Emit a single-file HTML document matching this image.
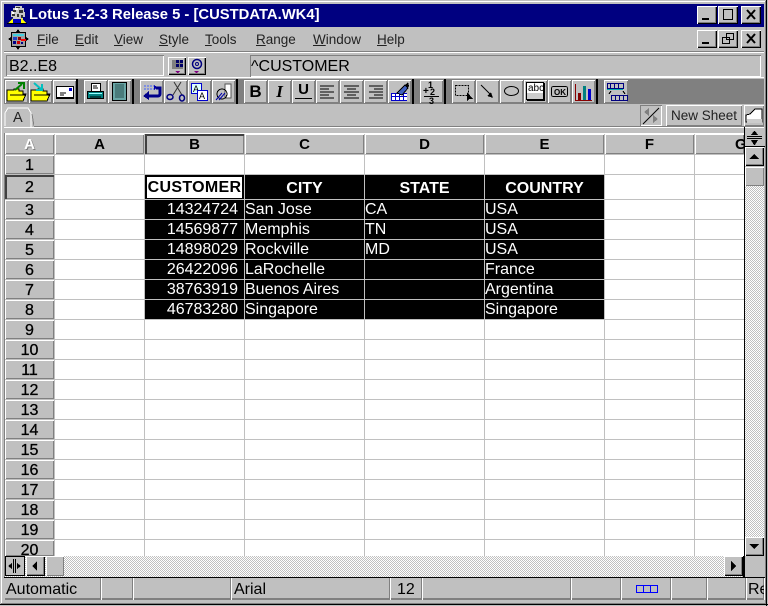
<!DOCTYPE html>
<html><head><meta charset="utf-8"><title>Lotus 1-2-3</title>
<style>
html,body{margin:0;padding:0;background:#c0c0c0}
#w{position:relative;width:768px;height:606px;overflow:hidden;background:#c0c0c0;font-family:"Liberation Sans",Arial,sans-serif;color:#000}
#w div,#w span,#w svg{position:absolute}
#w svg{shape-rendering:crispEdges}
.b{background:#c0c0c0;box-shadow:inset 1px 1px #fff,inset -1px -1px #808080;}
.tb{top:80px;width:23px;height:23px}
.tb svg{left:0;top:0}
.wb{width:20px;height:18px;background:#c0c0c0;box-shadow:inset 1px 1px #fff,inset -1px -1px #000,inset -2px -2px #808080}
.wb svg{left:0;top:0}
.m{top:32px;font-size:13.5px;line-height:16px;color:#222;white-space:nowrap}
u{text-decoration:underline}
.ch{top:134px;height:20px;background:#c0c0c0;box-shadow:inset 1px 1px #fff,inset -1px -1px #808080;text-align:center;font:bold 15px/22px "Liberation Sans",sans-serif}
.rh{left:5px;width:49px;background:#c0c0c0;box-shadow:inset 1px 1px #fff,inset -1px -1px #808080;text-align:center;font:16px/22px "Liberation Sans",sans-serif;-webkit-text-stroke:.3px #000;overflow:hidden}
.h{left:55px;width:689px;height:1px;background:#c0c0c0}
.v{top:155px;width:1px;height:401px;background:#c0c0c0}
.d{font-size:16px;line-height:20px;color:#fff;white-space:nowrap}
.n{left:145px;width:93px;text-align:right}
.c{left:245px}.e{left:365px}.f{left:485px}
.t{font:bold 16px/24px "Liberation Sans",sans-serif;color:#fff;text-align:center;top:177px}
.s{top:578px;height:22px;background:#c0c0c0;box-shadow:inset 0 -2px #808080,inset -1px 0 #808080;border-right:1px solid #fff;font-size:16px;line-height:24px;white-space:nowrap;overflow:hidden}
.hatch{background:repeating-conic-gradient(#c0c0c0 0 25%,#fff 0 50%) 0 0/2px 2px}
</style></head><body><div id="w">
<!-- frame -->
<div style="left:0;top:0;width:768px;height:1px;background:#c0c0c0"></div>
<div style="left:1px;top:1px;width:765px;height:1px;background:#fff"></div>
<div style="left:1px;top:1px;width:1px;height:603px;background:#fff"></div>
<div style="left:766px;top:0;width:1px;height:606px;background:#000"></div>
<div style="left:765px;top:1px;width:1px;height:604px;background:#808080"></div>
<div style="left:0;top:604px;width:768px;height:1px;background:#000"></div>
<div style="left:1px;top:603px;width:765px;height:1px;background:#808080"></div>

<!-- title -->
<div style="left:4px;top:4px;width:760px;height:23px;background:#000080"></div>
<svg style="left:6px;top:5px" width="22" height="20" viewBox="0 0 22 20"><path d="M9 1h7v2h2v4h1v5h-2v3H7v-3H5V6h2V3h2z" fill="#c8c8c8"/><path d="M10 2h4v1h-4zM7 5h3v2H7zM13 5h4v3h-4zM6 9h3v2H6zM11 9h2v3h-2zM15 10h2v3h-2z" fill="#333"/><path d="M9 3h3v2H9zM6 7h2v2H6z" fill="#fff"/><path d="M2 18l5-5v5zM20 18l-5-5v5z" fill="#ff0"/><rect x="7" y="14" width="8" height="4" fill="#0000c0"/><rect x="1" y="18" width="20" height="1" fill="#000"/></svg>
<div style="left:29px;top:7px;color:#fff;font:bold 14.8px/17px 'Liberation Sans',sans-serif;white-space:nowrap">Lotus 1-2-3 Release 5 - [CUSTDATA.WK4]</div>
<div class="wb" style="left:697px;top:6px"><svg width="20" height="18"><rect x="5" y="12" width="7" height="2" fill="#000"/></svg></div>
<div class="wb" style="left:718px;top:6px"><svg width="20" height="18"><path d="M5.500 3.500h9v10h-9z" fill="none" stroke="#000"/><rect x="5" y="3" width="10" height="1"/></svg></div>
<div class="wb" style="left:741px;top:6px"><svg width="20" height="18"><path d="M6 4l8 9M14 4l-8 9" stroke="#000" stroke-width="2" style="shape-rendering:auto"/></svg></div>

<!-- menu -->
<svg style="left:8px;top:29px" width="21" height="21" viewBox="0 0 21 21"><path d="M10 0l2 3H8zM10 21l-2-3h4zM0 10l3-2v4zM21 10l-3 2V8z" fill="#000"/><rect x="3" y="3" width="15" height="15" fill="#000"/><rect x="4" y="4" width="13" height="13" fill="#a0a0a0"/><rect x="5" y="5" width="11" height="2" fill="#40d0e0"/><rect x="5" y="8" width="4" height="3" fill="#2040c0"/><rect x="10" y="8" width="3" height="3" fill="#800"/><rect x="13" y="10" width="5" height="2" fill="#f00"/><rect x="5" y="12" width="3" height="3" fill="#008"/><rect x="9" y="12" width="3" height="3" fill="#c00"/><rect x="13" y="13" width="2" height="2" fill="#008"/></svg>
<div class="m" style="left:37px"><u>F</u>ile</div>
<div class="m" style="left:75px"><u>E</u>dit</div>
<div class="m" style="left:114px"><u>V</u>iew</div>
<div class="m" style="left:159px"><u>S</u>tyle</div>
<div class="m" style="left:205px"><u>T</u>ools</div>
<div class="m" style="left:256px"><u>R</u>ange</div>
<div class="m" style="left:313px"><u>W</u>indow</div>
<div class="m" style="left:377px"><u>H</u>elp</div>
<div class="wb" style="left:697px;top:30px"><svg width="20" height="18"><rect x="5" y="12" width="7" height="2"/></svg></div>
<div class="wb" style="left:718px;top:30px"><svg width="20" height="18"><path d="M8.500 3.500h7v6h-7zM4.500 7.500h7v6h-7z" fill="#c0c0c0" stroke="#000"/><rect x="8" y="3" width="8" height="1"/><rect x="4" y="7" width="8" height="1"/></svg></div>
<div class="wb" style="left:741px;top:30px"><svg width="20" height="18"><path d="M6 4l8 9M14 4l-8 9" stroke="#000" stroke-width="2" style="shape-rendering:auto"/></svg></div>
<div style="left:4px;top:51px;width:760px;height:1px;background:#808080"></div>
<div style="left:4px;top:52px;width:760px;height:1px;background:#fff"></div>

<!-- edit line -->
<div style="left:6px;top:55px;width:158px;height:21px;box-shadow:inset 1px 1px #808080,inset -1px -1px #fff"></div>
<div style="left:9px;top:57px;font-size:16px;line-height:19px">B2..E8</div>
<div class="wb" style="left:168px;top:57px;width:18px;height:18px"><svg width="18" height="18"><rect x="4" y="3" width="11" height="9" fill="#808080"/><path d="M8 3h3v3H8zM12 3h3v3h-3zM8 7h3v3H8zM12 7h3v3h-3z" fill="#006"/><path d="M7 14h5l-2 2H9z" fill="#800080"/></svg></div>
<div class="wb" style="left:188px;top:57px;width:18px;height:18px"><svg width="18" height="18" style="shape-rendering:auto"><circle cx="9" cy="7" r="4.500" fill="none" stroke="#000080" stroke-width="1.500"/><circle cx="9" cy="7" r="1.500" fill="none" stroke="#000080"/><path d="M6 14h5l-2 2H8z" fill="#800080"/></svg></div>
<div style="left:250px;top:55px;width:511px;height:22px;box-shadow:inset 1px 1px #808080,inset -1px -1px #fff"></div>
<div style="left:251px;top:57px;font-size:16px;line-height:19px;white-space:nowrap">^CUSTOMER</div>
<div style="left:4px;top:77px;width:760px;height:1px;background:#fff"></div>

<!-- toolbar -->
<div style="left:4px;top:79px;width:760px;height:25px;background:#808080"></div>
<div style="left:76px;top:79px;width:2px;height:25px;background:#000"></div>
<div style="left:132px;top:79px;width:2px;height:25px;background:#000"></div>
<div style="left:236px;top:79px;width:2px;height:25px;background:#000"></div>
<div style="left:412px;top:79px;width:2px;height:25px;background:#000"></div>
<div style="left:444px;top:79px;width:2px;height:25px;background:#000"></div>
<div style="left:596px;top:79px;width:2px;height:25px;background:#000"></div>

<div class="b tb" style="left:5px"><svg width="23" height="23"><path d="M2 10h7v-1h5v2h4v3h3l-3 7H2z" fill="#ff0" stroke="#000"/><path d="M5 15h15" stroke="#000"/><path d="M10 10l7-6M13 3h6v6" fill="none" stroke="#008000" stroke-width="2" style="shape-rendering:auto"/></svg></div>
<div class="b tb" style="left:29px"><svg width="23" height="23"><path d="M2 10h7v-1h5v2h4v3h3l-3 7H2z" fill="#ff0" stroke="#000"/><path d="M5 15h15" stroke="#000"/><path d="M5 3l7 6M13 4v6H7" fill="none" stroke="#00c0c0" stroke-width="2" style="shape-rendering:auto"/></svg></div>
<div class="b tb" style="left:53px"><svg width="23" height="23"><rect x="3.500" y="6.500" width="17" height="12" fill="#fff" stroke="#000"/><rect x="4" y="17" width="17" height="2"/><rect x="16" y="8" width="3" height="3" fill="#00c"/><path d="M7 13h6M7 15h4" stroke="#000"/></svg></div>
<div class="b tb" style="left:84px"><svg width="23" height="23"><rect x="7.500" y="3.500" width="9" height="8" fill="#fff" stroke="#000"/><path d="M9 6h4M9 8h5" stroke="#000"/><path d="M3.500 11.500h16v7h-16z" fill="#008080" stroke="#000"/><rect x="5" y="13" width="13" height="1" fill="#9ff"/><rect x="6" y="16" width="11" height="2" fill="#004040"/></svg></div>
<div class="b tb" style="left:108px"><svg width="23" height="23"><rect x="4.500" y="2.500" width="14" height="18" fill="#6aa6a6" stroke="#000"/><path d="M7 5h9M7 7h9M7 9h9M7 11h9M7 13h9M7 15h9M7 17h9" stroke="#2a5050"/></svg></div>
<div class="b tb" style="left:140px"><svg width="23" height="23"><path d="M4 6h10M4 9h10" stroke="#4060ff" stroke-dasharray="2 1"/><path d="M14 5l3 2-3 3z" fill="#00a"/><path d="M16 8h4v6a2 2 0 0 1-2 2H8" fill="none" stroke="#00008b" stroke-width="3" style="shape-rendering:auto"/><path d="M9 11v9l-6-4z" fill="#00008b"/></svg></div>
<div class="b tb" style="left:164px"><svg width="23" height="23" style="shape-rendering:auto"><path d="M17 2L9 15M10 2l8 13" stroke="#333" fill="none"/><ellipse cx="6" cy="17" rx="3" ry="2.500" fill="none" stroke="#000080" stroke-width="1.500"/><ellipse cx="18" cy="18" rx="2.500" ry="3" fill="none" stroke="#000080" stroke-width="1.500"/></svg></div>
<div class="b tb" style="left:188px"><svg width="23" height="23"><rect x="3.500" y="3.500" width="10" height="10" fill="#dff" stroke="#00c"/><text x="5" y="12" font-size="9" font-family="Liberation Sans">A</text><rect x="9.500" y="10.500" width="10" height="10" fill="#fff" stroke="#00c"/><text x="11" y="19" font-size="9" font-family="Liberation Sans">A</text></svg></div>
<div class="b tb" style="left:212px"><svg width="23" height="23"><rect x="13" y="4" width="6" height="14" fill="#fff" stroke="#555"/><circle cx="10" cy="14" r="5" fill="none" stroke="#000"/><path d="M4 20l6-7M7 20l6-7" stroke="#00a" style="shape-rendering:auto"/></svg></div>

<div class="b tb" style="left:244px"><span style="left:0;top:2px;width:23px;text-align:center;font:bold 17px/19px 'Liberation Sans',sans-serif">B</span></div>
<div class="b tb" style="left:268px"><span style="left:0;top:2px;width:23px;text-align:center;font:italic bold 17px/19px 'Liberation Serif',serif">I</span></div>
<div class="b tb" style="left:292px"><span style="left:0;top:1px;width:23px;text-align:center;font:bold 15px/18px 'Liberation Sans',sans-serif">U</span><svg width="23" height="23"><rect x="3" y="18" width="17" height="1"/></svg></div>
<div class="b tb" style="left:316px"><svg width="23" height="23"><path d="M4 6h14M4 9h9M4 12h14M4 15h9M4 18h14" stroke="#000"/></svg></div>
<div class="b tb" style="left:340px"><svg width="23" height="23"><path d="M4 6h15M7 9h9M4 12h15M7 15h9M4 18h15" stroke="#000"/></svg></div>
<div class="b tb" style="left:364px"><svg width="23" height="23"><path d="M5 6h14M10 9h9M5 12h14M10 15h9M5 18h14" stroke="#000"/></svg></div>
<div class="b tb" style="left:388px"><svg width="23" height="23"><rect x="3" y="13" width="16" height="8" fill="#fff"/><path d="M3.500 13v8M7.500 13v8M11.500 13v8M15.500 13v8M3 13.500h16M3 16.500h16M3 20.500h16" stroke="#00c"/><path d="M9 13l8-8 3 3-6 7z" fill="#4060c0" stroke="#000"/><path d="M17 5l3-3 1 4-1 1z" fill="#000"/></svg></div>
<div class="b tb" style="left:420px"><span style="left:8px;top:0;font:bold 9px/10px 'Liberation Sans',sans-serif">1</span><span style="left:3px;top:7px;font:bold 10px/10px 'Liberation Sans',sans-serif">+</span><span style="left:10px;top:7px;font:bold 9px/10px 'Liberation Sans',sans-serif">2</span><svg width="23" height="23"><rect x="4" y="16" width="15" height="1"/></svg><span style="left:9px;top:13px;margin-top:3px;font:bold 9px/10px 'Liberation Sans',sans-serif">3</span></div>
<div class="b tb" style="left:452px"><svg width="23" height="23"><rect x="3.500" y="5.500" width="13" height="10" fill="none" stroke="#000" stroke-dasharray="2 1"/><path d="M15 12v9l2-2 2 0 2 0z" fill="#000"/></svg></div>
<div class="b tb" style="left:476px"><svg width="23" height="23"><path d="M5 5l11 11" stroke="#000" style="shape-rendering:auto"/><path d="M17 18l-6-2 4-4z" fill="#000"/></svg></div>
<div class="b tb" style="left:500px"><svg width="23" height="23" style="shape-rendering:auto"><ellipse cx="11.500" cy="11" rx="7" ry="4.500" fill="none" stroke="#000"/></svg></div>
<div class="b tb" style="left:524px"><svg width="23" height="23"><rect x="2.500" y="2.500" width="17" height="17" fill="#fff" stroke="#000"/><rect x="3" y="13" width="16" height="6" fill="#ccc"/><rect x="19" y="3" width="2" height="18"/><rect x="3" y="19" width="18" height="2"/><text x="4" y="11" font-size="10" font-family="Liberation Sans">abc</text></svg></div>
<div class="b tb" style="left:548px"><svg width="23" height="23"><rect x="3.500" y="6.500" width="16" height="10" rx="2" fill="#c0c0c0" stroke="#000"/><text x="6" y="15" font-size="8" font-weight="bold" font-family="Liberation Sans">OK</text></svg></div>
<div class="b tb" style="left:572px"><svg width="23" height="23"><rect x="3" y="4" width="1" height="16" fill="#800" /><rect x="3" y="20" width="17" height="1" fill="#800"/><rect x="6" y="13" width="3" height="7" fill="#800000"/><rect x="11" y="6" width="3" height="14" fill="#008080"/><rect x="16" y="9" width="3" height="11" fill="#00c"/></svg></div>
<div class="b tb" style="left:604px;width:24px"><svg width="24" height="23"><path d="M3.500 3.500h16v5h-16zM6.500 3.500v5M10.500 3.500v5M14.500 3.500v5" fill="#c0c0c0" stroke="#000080"/><path d="M7.500 15.500h16v5h-16zM11.500 15.500v5M15.500 15.500v5M19.500 15.500v5" fill="#c0c0c0" stroke="#000080"/><rect x="3" y="9" width="16" height="1" fill="#0aa"/><path d="M5 14l2-3M19 11l2 3" stroke="#000"/></svg></div>

<!-- tab row -->
<div style="left:4px;top:104px;width:760px;height:22px;background:#c0c0c0"></div>
<svg style="left:4px;top:106px" width="30" height="22"><path d="M1 20V7l3-5h20l3 5v14" fill="#c0c0c0" stroke="#fff"/><path d="M28 8l2 12" stroke="#808080"/></svg>
<div style="left:13px;top:110px;font-size:14.5px;line-height:16px;color:#222">A</div>
<div style="left:34px;top:126px;width:730px;height:1px;background:#808080"></div>
<div style="left:4px;top:127px;width:760px;height:1px;background:#fff"></div>
<div style="left:640px;top:105px;width:22px;height:21px;box-shadow:inset 1px 1px #808080,inset -1px -1px #fff"><svg width="22" height="21"><path d="M3 19L19 3" stroke="#000" style="shape-rendering:auto"/><path d="M9 3v8l-5-4zM13 10v8l5-4z" fill="#808080"/></svg></div>
<div class="b" style="left:666px;top:105px;width:76px;height:21px;font-size:13.5px;line-height:21px;text-align:center;color:#222;white-space:nowrap">New Sheet</div>
<div class="b" style="left:744px;top:105px;width:20px;height:21px"><svg width="20" height="21"><path d="M2 10l4-1 5-5h7v13H2z" fill="#fff" stroke="#000"/><rect x="3" y="14" width="15" height="4" fill="#ccc"/></svg></div>

<!-- grid -->
<div style="left:4px;top:133px;width:1px;height:445px;background:#808080"></div>
<div style="left:5px;top:133px;width:760px;height:1px;background:#fff"></div>
<div style="left:55px;top:155px;width:689px;height:401px;background:#fff"></div>
<div style="left:145px;top:175px;width:460px;height:145px;background:#000"></div>

<div class="h" style="top:174px"></div><div class="h" style="top:199px"></div><div class="h" style="top:219px"></div><div class="h" style="top:239px"></div><div class="h" style="top:259px"></div><div class="h" style="top:279px"></div><div class="h" style="top:299px"></div><div class="h" style="top:319px"></div><div class="h" style="top:339px"></div><div class="h" style="top:359px"></div><div class="h" style="top:379px"></div><div class="h" style="top:399px"></div><div class="h" style="top:419px"></div><div class="h" style="top:439px"></div><div class="h" style="top:459px"></div><div class="h" style="top:479px"></div><div class="h" style="top:499px"></div><div class="h" style="top:519px"></div><div class="h" style="top:539px"></div>
<div class="v" style="left:144px"></div><div class="v" style="left:244px"></div><div class="v" style="left:364px"></div><div class="v" style="left:484px"></div><div class="v" style="left:604px"></div><div class="v" style="left:694px"></div>

<div class="ch" style="left:5px;width:49px;color:#fff;text-shadow:1px 1px #808080">A</div>
<div class="ch" style="left:55px;width:89px">A</div>
<div class="ch" style="left:145px;width:99px;box-shadow:inset 2px 2px #404040,inset -1px -1px #808080">B</div>
<div class="ch" style="left:245px;width:119px">C</div>
<div class="ch" style="left:365px;width:119px">D</div>
<div class="ch" style="left:485px;width:119px">E</div>
<div class="ch" style="left:605px;width:89px">F</div>
<div class="ch" style="left:695px;width:49px;overflow:hidden"><span style="left:40px;top:0">G</span></div>

<div class="rh" style="top:155px;height:19px;line-height:21px">1</div>
<div class="rh" style="top:175px;height:24px;line-height:26px;box-shadow:inset 2px 2px #404040,inset -1px -1px #808080">2</div>
<div class="rh" style="top:200px;height:19px">3</div>
<div class="rh" style="top:220px;height:19px">4</div>
<div class="rh" style="top:240px;height:19px">5</div>
<div class="rh" style="top:260px;height:19px">6</div>
<div class="rh" style="top:280px;height:19px">7</div>
<div class="rh" style="top:300px;height:19px">8</div>
<div class="rh" style="top:320px;height:19px">9</div>
<div class="rh" style="top:340px;height:19px">10</div>
<div class="rh" style="top:360px;height:19px">11</div>
<div class="rh" style="top:380px;height:19px">12</div>
<div class="rh" style="top:400px;height:19px">13</div>
<div class="rh" style="top:420px;height:19px">14</div>
<div class="rh" style="top:440px;height:19px">15</div>
<div class="rh" style="top:460px;height:19px">16</div>
<div class="rh" style="top:480px;height:19px">17</div>
<div class="rh" style="top:500px;height:19px">18</div>
<div class="rh" style="top:520px;height:19px">19</div>
<div class="rh" style="top:540px;height:16px">20</div>

<div style="left:145px;top:175px;width:99px;height:24px;background:#000"></div>
<div style="left:147px;top:177px;width:95px;height:21px;background:#fff;color:#000;font:bold 16px/22px 'Liberation Sans',sans-serif;text-align:center;white-space:nowrap;letter-spacing:.3px">CUSTOMER</div>
<div class="t" style="left:245px;width:119px">CITY</div>
<div class="t" style="left:365px;width:119px">STATE</div>
<div class="t" style="left:485px;width:119px">COUNTRY</div>

<div class="d n" style="top:200px">14324724</div><div class="d c" style="top:200px">San Jose</div><div class="d e" style="top:200px">CA</div><div class="d f" style="top:200px">USA</div>
<div class="d n" style="top:220px">14569877</div><div class="d c" style="top:220px">Memphis</div><div class="d e" style="top:220px">TN</div><div class="d f" style="top:220px">USA</div>
<div class="d n" style="top:240px">14898029</div><div class="d c" style="top:240px">Rockville</div><div class="d e" style="top:240px">MD</div><div class="d f" style="top:240px">USA</div>
<div class="d n" style="top:260px">26422096</div><div class="d c" style="top:260px">LaRochelle</div><div class="d f" style="top:260px">France</div>
<div class="d n" style="top:280px">38763919</div><div class="d c" style="top:280px">Buenos Aires</div><div class="d f" style="top:280px">Argentina</div>
<div class="d n" style="top:300px">46783280</div><div class="d c" style="top:300px">Singapore</div><div class="d f" style="top:300px">Singapore</div>

<!-- vertical scrollbar -->
<div style="left:744px;top:127px;width:1px;height:450px;background:#000"></div>
<div style="left:745px;top:128px;width:20px;height:429px;background:#c0c0c0"></div>
<svg style="left:745px;top:128px" width="20" height="19"><path d="M2 8.500h15M2 10.500h15" stroke="#000"/><path d="M9 3h1l3 4H6zM9 17h1l3-5H6z" fill="#000"/><rect x="0" y="18" width="20" height="1"/></svg>
<div class="wb" style="left:745px;top:147px;width:19px;height:19px"><svg width="19" height="19"><path d="M4 12h10L9 7z" fill="#000"/></svg></div>
<div class="hatch" style="left:745px;top:186px;width:19px;height:351px"></div>
<div class="b" style="left:745px;top:167px;width:19px;height:19px"></div>
<div class="wb" style="left:745px;top:537px;width:19px;height:19px"><svg width="19" height="19"><path d="M4 7h10l-5 5z" fill="#000"/></svg></div>

<!-- horizontal scrollbar -->
<div class="hatch" style="left:5px;top:556px;width:739px;height:21px"></div>
<div class="b" style="left:5px;top:556px;width:20px;height:20px;background:#c0c0c0;box-shadow:inset 1px 1px #000,inset -1px -1px #000"><svg width="20" height="20"><path d="M8.500 3v14M10.500 3v14" stroke="#000"/><path d="M7 7v6l-4-3zM12 7v6l4-3z" fill="#000"/></svg></div>
<div class="wb" style="left:26px;top:556px;width:19px;height:20px"><svg width="19" height="20"><path d="M11 5v10l-5-5z" fill="#000"/></svg></div>
<div class="b" style="left:46px;top:556px;width:18px;height:20px"></div>
<div class="wb" style="left:724px;top:556px;width:19px;height:20px"><svg width="19" height="20"><path d="M7 5v10l5-5z" fill="#000"/></svg></div>
<div style="left:745px;top:557px;width:20px;height:20px;background:#c0c0c0"></div>
<div style="left:743px;top:556px;width:1px;height:21px;background:#000"></div>

<!-- status -->
<div style="left:4px;top:577px;width:761px;height:1px;background:#000"></div>
<div class="s" style="left:5px;width:97px;padding-left:1px;box-sizing:border-box">Automatic</div>
<div class="s" style="left:102px;width:31px"></div>
<div class="s" style="left:134px;width:97px"></div>
<div class="s" style="left:232px;width:158px"><span style="left:2px;top:0">Arial</span></div>
<div class="s" style="left:391px;width:31px"><span style="left:6px;top:0">12</span></div>
<div class="s" style="left:423px;width:148px"></div>
<div class="s" style="left:572px;width:49px"></div>
<div class="s" style="left:622px;width:49px"><svg style="left:14px;top:7px" width="22" height="9"><rect x="0" y="0" width="22" height="8" fill="#00f"/><rect x="1" y="1" width="6" height="6" fill="#c0c0c0"/><rect x="8" y="1" width="6" height="6" fill="#c0c0c0"/><rect x="15" y="1" width="6" height="6" fill="#c0c0c0"/></svg></div>
<div class="s" style="left:672px;width:35px"></div>
<div class="s" style="left:708px;width:38px"></div>
<div class="s" style="left:747px;width:17px"><span style="left:1px;top:0">Re</span></div>
</div></body></html>
